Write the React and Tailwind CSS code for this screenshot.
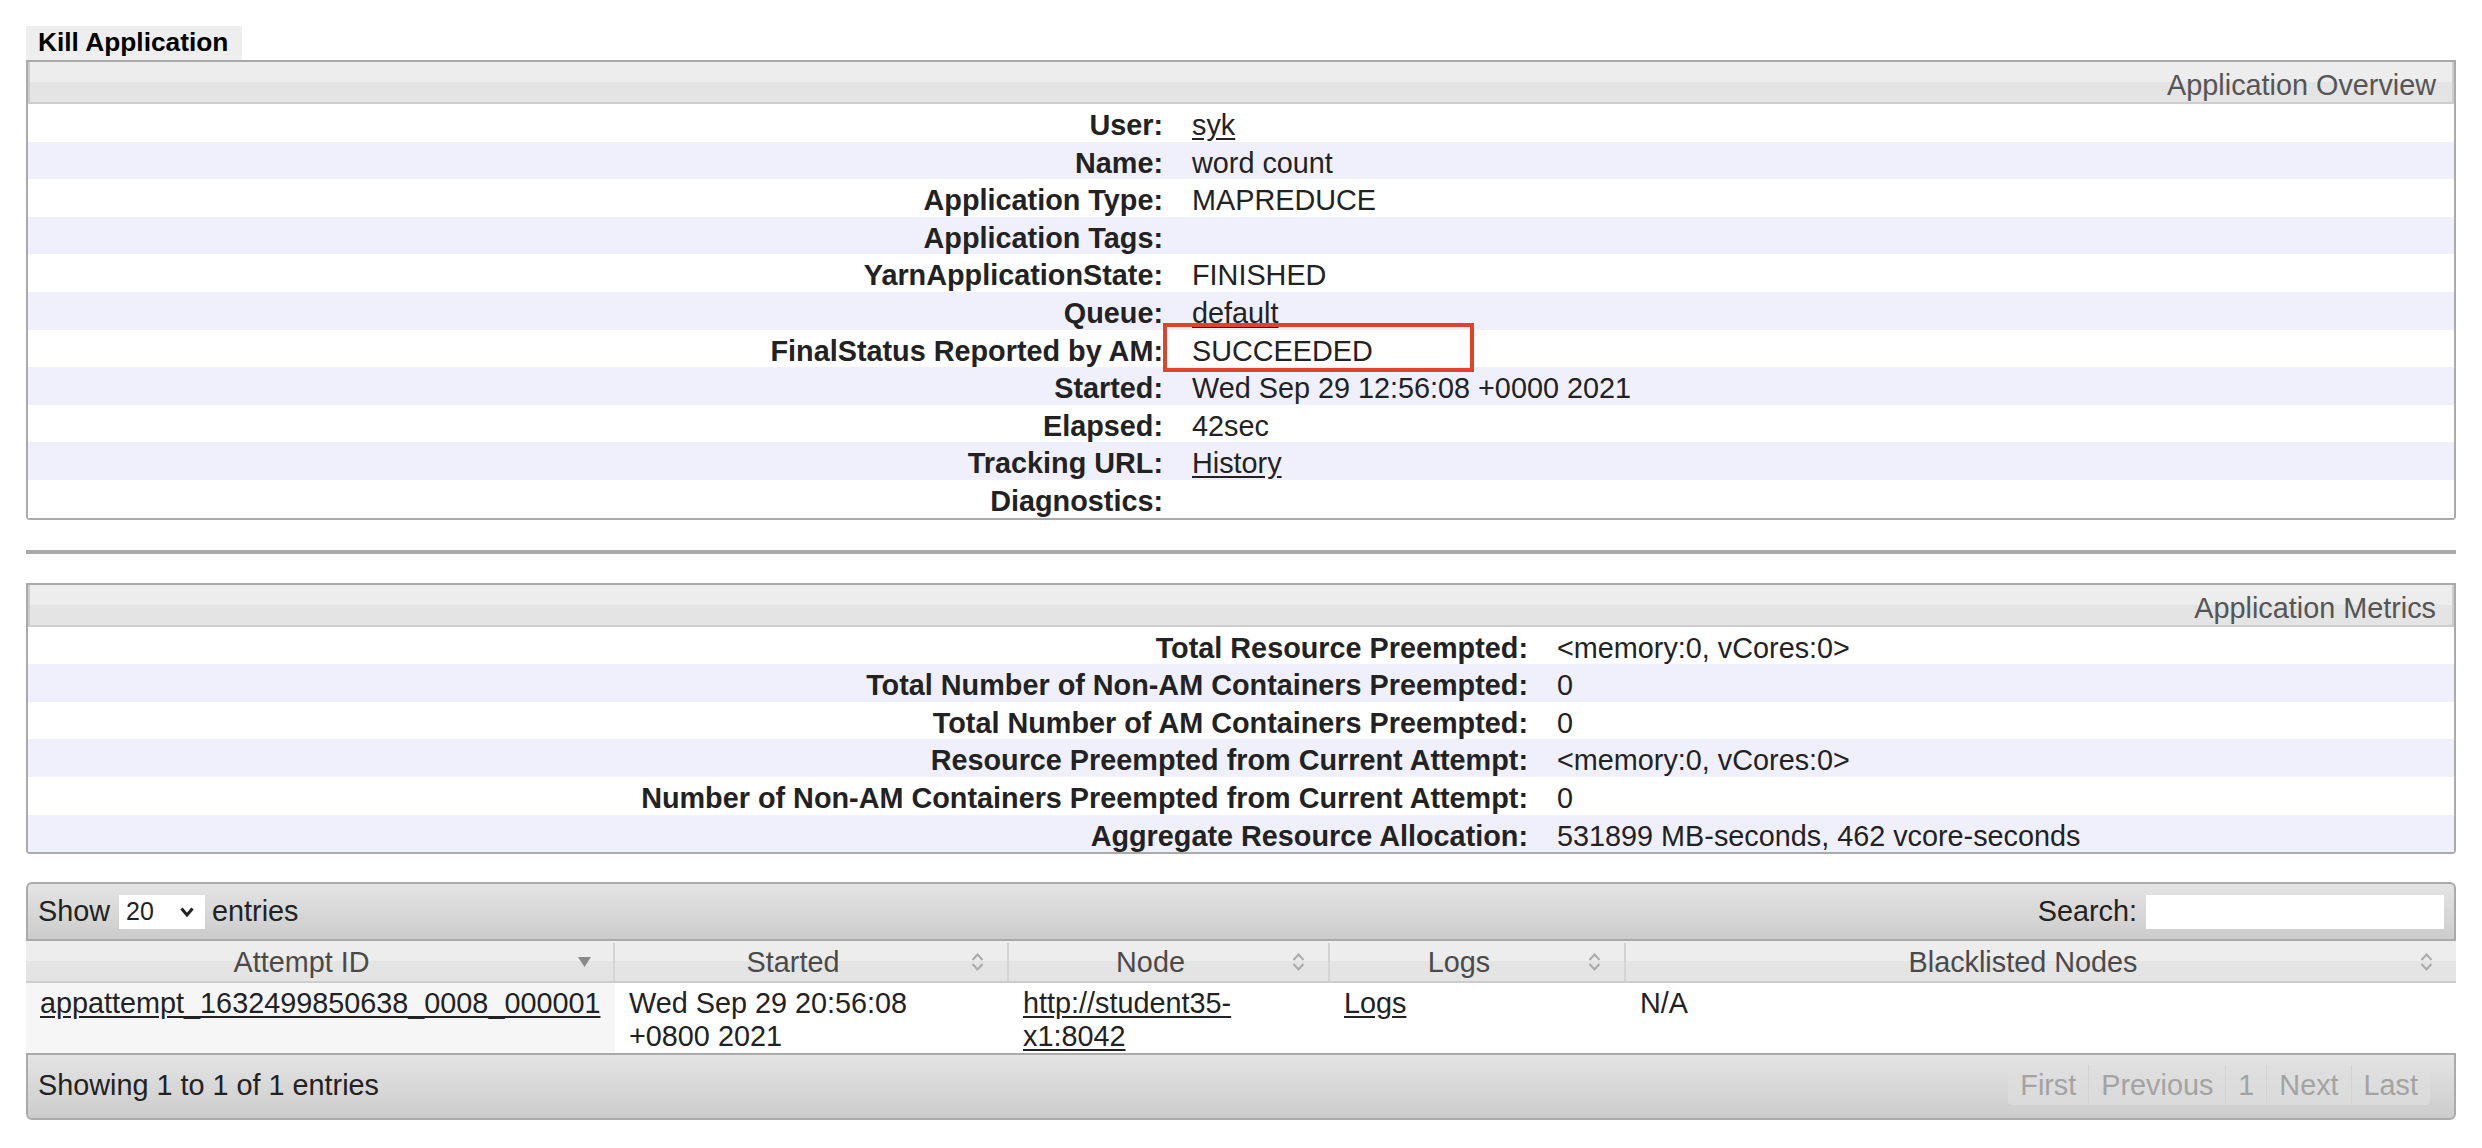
import React from 'react'

const SortBoth = () => (
  <svg width="15" height="20" viewBox="0 0 15 20" fill="none" stroke="#ababab" strokeWidth="2">
    <path d="M2.5 8 L7.5 2.5 L12.5 8" />
    <path d="M2.5 12 L7.5 17.5 L12.5 12" />
  </svg>
)

const SortDesc = () => (
  <svg width="13" height="10" viewBox="0 0 13 10">
    <polygon points="0,0 13,0 6.5,10" fill="#8a8a8a" />
  </svg>
)

const Link = ({ children }) => <a className="underline underline-offset-[3px] text-[#222]">{children}</a>

const overview = [
  ['User:', <Link>syk</Link>],
  ['Name:', 'word count'],
  ['Application Type:', 'MAPREDUCE'],
  ['Application Tags:', ''],
  ['YarnApplicationState:', 'FINISHED'],
  ['Queue:', <Link>default</Link>],
  ['FinalStatus Reported by AM:', 'SUCCEEDED'],
  ['Started:', 'Wed Sep 29 12:56:08 +0000 2021'],
  ['Elapsed:', '42sec'],
  ['Tracking URL:', <Link>History</Link>],
  ['Diagnostics:', ''],
]

const metrics = [
  ['Total Resource Preempted:', '<memory:0, vCores:0>'],
  ['Total Number of Non-AM Containers Preempted:', '0'],
  ['Total Number of AM Containers Preempted:', '0'],
  ['Resource Preempted from Current Attempt:', '<memory:0, vCores:0>'],
  ['Number of Non-AM Containers Preempted from Current Attempt:', '0'],
  ['Aggregate Resource Allocation:', '531899 MB-seconds, 462 vcore-seconds'],
]

const InfoBox = ({ title, rows, labelWidth, mark }) => (
  <div className="border-2 border-[#aaa] rounded-b-[4px]">
    <div className="h-[42px] border-x-2 border-b-2 border-[#cdcdcd] bg-[linear-gradient(#ededed_50%,#e4e4e4_50%)] pr-[16px] pt-[6px] text-right leading-[34px] text-[#555]">
      {title}
    </div>
    {rows.map(([label, value], i) => (
      <div key={label} className={i % 2 ? 'flex h-[37.6px] bg-[#f0f0fc]' : 'relative flex h-[37.6px] bg-white'}>
        <div className={`${labelWidth} shrink-0 pt-[5px] text-right font-bold leading-[32px] text-[#222]`}>{label}</div>
        <div className="pl-[29px] pt-[5px] leading-[32px] text-[#222] whitespace-nowrap">{value}</div>
        {mark === i && (
          <div className="absolute left-[1135px] -top-[7px] h-[49px] w-[311px] border-4 border-[#e4412b]" />
        )}
      </div>
    ))}
  </div>
)

const cols = 'grid grid-cols-[589px_394px_321px_296px_1fr]'

const headers = [
  ['Attempt ID', <SortDesc />],
  ['Started', <SortBoth />],
  ['Node', <SortBoth />],
  ['Logs', <SortBoth />],
  ['Blacklisted Nodes', <SortBoth />],
]

const pages = ['First', 'Previous', '1', 'Next', 'Last']

export default function App() {
  return (
    <div className="min-h-screen bg-white px-[26px] pt-[26px] font-['Liberation_Sans',Arial,Helvetica,sans-serif] text-[28.8px] text-[#222]">
      <div className="h-[34px] w-[216px] bg-[#eeeeee] pl-[12px] text-[26.3px] font-bold leading-[33px] text-black">
        Kill Application
      </div>

      <InfoBox title="Application Overview" rows={overview} labelWidth="w-[1135px]" mark={6} />

      <div className="mt-[30px] h-[4px] bg-[#aaa]" />

      <div className="mt-[29px]">
        <InfoBox title="Application Metrics" rows={metrics} labelWidth="w-[1500px]" />
      </div>

      <div className="mt-[28px]">
        <div className="flex h-[59px] items-center justify-between rounded-t-[6px] border-2 border-[#aaa] bg-[linear-gradient(#e4e4e4,#cccccc)] px-[10px]">
          <div className="flex items-center">
            <span>Show</span>
            <div className="ml-[9px] flex h-[34px] w-[86px] items-center bg-white pl-[7px] text-[25px]">
              <span>20</span>
              <svg className="ml-auto mr-[11px]" width="14" height="10" viewBox="0 0 14 10" fill="none" stroke="#222" strokeWidth="3">
                <path d="M1.5 1.5 L7 8 L12.5 1.5" />
              </svg>
            </div>
            <span className="ml-[7px]">entries</span>
          </div>
          <div className="flex items-center">
            <span>Search:</span>
            <input className="ml-[9px] h-[34px] w-[298px] border-0 bg-white outline-none" />
          </div>
        </div>

        <div className={`${cols} h-[42px] border-b-2 border-[#cccccc] bg-[linear-gradient(#ededed_50%,#e4e4e4_50%)] pt-[2px] text-[#4a4a4a]`}>
          {headers.map(([h, icon], i) => (
            <div key={h} className={i < 4 ? 'relative border-r-2 border-[#d4d4d4] pr-[36px] text-center leading-[38px]' : 'relative pr-[36px] text-center leading-[38px]'}>
              {h}
              <span className="absolute right-[22px] top-1/2 flex -translate-y-1/2">{icon}</span>
            </div>
          ))}
        </div>

        <div className={`${cols} h-[70px] leading-[33px]`}>
          <div className="bg-[#f6f6f6] px-[14px] pt-[4px]"><Link>appattempt_1632499850638_0008_000001</Link></div>
          <div className="px-[14px] pt-[4px]">Wed Sep 29 20:56:08<br />+0800 2021</div>
          <div className="px-[14px] pt-[4px]"><Link>http://student35-<br />x1:8042</Link></div>
          <div className="px-[14px] pt-[4px]"><Link>Logs</Link></div>
          <div className="px-[14px] pt-[4px]">N/A</div>
        </div>

        <div className="flex h-[67px] items-start justify-between rounded-b-[6px] border-2 border-[#aaa] bg-[linear-gradient(#e4e4e4,#cccccc)]">
          <div className="pl-[10px] pt-[14px] leading-[32px]">Showing 1 to 1 of 1 entries</div>
          <div className="mr-[24px] mt-[10px] flex h-[40px] overflow-hidden rounded-[4px] bg-[#dedede]/70 text-[#a3a3a3]">
            {pages.map((p, i) => (
              <div key={p} className={i < 4 ? 'border-r border-[#d2d2d2] px-[12px] leading-[40px]' : 'px-[12px] leading-[40px]'}>{p}</div>
            ))}
          </div>
        </div>
      </div>
    </div>
  )
}
